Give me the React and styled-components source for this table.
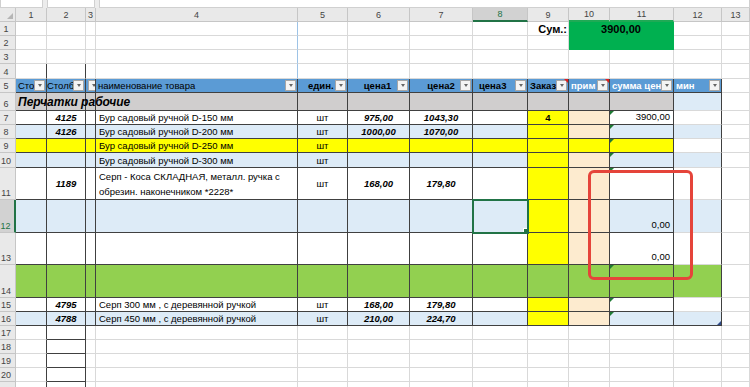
import React from 'react';
import styled, { createGlobalStyle, css } from 'styled-components';

const GlobalStyle = createGlobalStyle`
  html, body {
    margin: 0;
    padding: 0;
    background: #fff;
  }
  body {
    font-family: "Liberation Sans", Arial, sans-serif;
    overflow: hidden;
  }
`;

// column widths: row numbers, columns 1..13
const COLS = '16px 31px 39px 10px 202px 50px 62px 63px 55px 41px 41px 64px 48px 28px';

const LIGHT = '#D9D9D9';
const DARK = '#404040';
const W = '#FFFFFF';
const BAND = '#DDEBF7';
const GRAY = '#D0CECE';
const YEL = '#FFFF00';
const PEACH = '#FDEBCF';
const GREEN = '#92D050';
const SUMGREEN = '#00B050';
const HEADBLUE = '#5B9BD5';
const XLGREEN = '#217346';

const Sheet = styled.div`
  position: relative;
  width: 750px;
  height: 387px;
  overflow: hidden;
`;

const TopStrip = styled.div`
  height: 8px;
  box-sizing: border-box;
  background: #ececec;
  display: flex;
  gap: 4px;
`;

const StripBox = styled.div`
  width: ${p => p.$w}px;
  flex: ${p => (p.$grow ? 1 : 'none')};
  background: #fff;
  border: 1px solid #d0d0d0;
  border-top: none;
  box-sizing: border-box;
`;

const ColHeadRow = styled.div`
  display: grid;
  grid-template-columns: ${COLS};
  height: 14px;
  background: #e9e9e9;
`;

const Corner = styled.div`
  position: relative;
  border-right: 1px solid #c6c6c6;
  border-bottom: 1px solid #c6c6c6;
  &::after {
    content: '';
    position: absolute;
    right: 2px;
    bottom: 2px;
    border-left: 6px solid transparent;
    border-bottom: 6px solid #b5b5b5;
  }
`;

const ColHead = styled.div`
  box-sizing: border-box;
  display: flex;
  align-items: center;
  justify-content: center;
  font-size: 9px;
  color: ${p => (p.$active ? XLGREEN : '#444')};
  background: ${p => (p.$active ? '#d2d2d2' : '#e9e9e9')};
  border-right: 1px solid #c6c6c6;
  border-bottom: ${p => (p.$active || p.$mark ? `2px solid ${p.$active ? XLGREEN : '#1faa55'}` : '1px solid #c6c6c6')};
`;

const SheetRow = styled.div`
  display: grid;
  grid-template-columns: ${COLS};
  grid-template-rows: ${p => p.$h}px;
  height: ${p => p.$h}px;
`;

const RowHead = styled.div`
  grid-column: 1;
  grid-row: 1;
  box-sizing: border-box;
  display: flex;
  align-items: flex-end;
  justify-content: center;
  padding: 0 3px 1px 0;
  font-size: 9px;
  color: ${p => (p.$active ? XLGREEN : '#444')};
  background: ${p => (p.$active ? '#d2d2d2' : '#e9e9e9')};
  border-bottom: 1px solid #c6c6c6;
  border-right: ${p => (p.$active ? `2px solid ${XLGREEN}` : '1px solid #c6c6c6')};
`;

const Cell = styled.div`
  position: relative;
  grid-row: 1;
  grid-column: ${p => p.$c} / span ${p => p.$span || 1};
  box-sizing: border-box;
  display: flex;
  align-items: ${p => p.$valign || 'center'};
  justify-content: ${p => p.$align || 'flex-start'};
  padding: 0 ${p => p.$pad ?? 2}px ${p => p.$pb ?? 0}px ${p => p.$pl ?? 2}px;
  background: ${p => p.$bg || W};
  border-right: 1px solid ${p => p.$br || LIGHT};
  border-bottom: 1px solid ${p => p.$bb || LIGHT};
  overflow: hidden;
  white-space: nowrap;
  font-size: ${p => p.$size || 9.5}px;
  color: ${p => p.$fg || '#000'};
  font-weight: ${p => (p.$bold ? 700 : 400)};
  font-style: ${p => (p.$italic ? 'italic' : 'normal')};
  ${p => p.$flag && css`
    &::before {
      content: '';
      position: absolute;
      top: 0;
      left: 0;
      border-top: 4px solid #1e7b34;
      border-right: 4px solid transparent;
    }
  `}
  ${p => p.$note && css`
    &::after {
      content: '';
      position: absolute;
      top: 0;
      right: 0;
      border-top: 4px solid #e02020;
      border-left: 4px solid transparent;
    }
  `}
  ${p => p.$handle && css`
    &::after {
      content: '';
      position: absolute;
      right: 0;
      bottom: 0;
      border-bottom: 4px solid #2f4a8a;
      border-left: 4px solid transparent;
    }
  `}
  ${p => p.$sel && css`
    z-index: 1;
    outline: 2px solid ${XLGREEN};
    outline-offset: -1px;
    &::after {
      content: '';
      position: absolute;
      right: -3px;
      bottom: -3px;
      width: 5px;
      height: 5px;
      background: ${XLGREEN};
      border: 1px solid #fff;
    }
  `}
`;

const HeadText = styled.span`
  flex: 1;
  min-width: 0;
  overflow: hidden;
  text-align: ${p => p.$align || 'left'};
  padding-left: ${p => p.$indent || 0}px;
  padding-right: 2px;
`;

const DropBtn = styled.span`
  flex: none;
  width: 11px;
  height: 11px;
  margin-left: auto;
  box-sizing: border-box;
  border: 1px solid #a6a6a6;
  background: #f4f4f4;
  display: flex;
  align-items: center;
  justify-content: center;
  &::after {
    content: '';
    border-left: 2.5px solid transparent;
    border-right: 2.5px solid transparent;
    border-top: 3px solid #666;
  }
`;

const Lines = styled.div`
  display: flex;
  flex-direction: column;
  white-space: nowrap;
  line-height: 15px;
`;

const GroupLabel = styled.div`
  position: relative;
  z-index: 2;
  grid-row: 1;
  grid-column: 2 / 10;
  align-self: center;
  padding-left: 2px;
  font-size: 12px;
  font-weight: 700;
  font-style: italic;
  color: #000;
  white-space: nowrap;
`;

const Annotation = styled.div`
  position: absolute;
  z-index: 3;
  left: 588px;
  top: 170px;
  width: 105px;
  height: 110px;
  box-sizing: border-box;
  border: 3px solid #e5443a;
  border-radius: 6px;
`;

const plainCells = (overrides = {}) =>
  Array.from({ length: 13 }, (_, i) => ({ col: i + 1, ...(overrides[i + 1] || {}) })).filter(
    c => !c.skip
  );

function tableBg(kind, col) {
  if (kind === 'green') return GREEN;
  if (kind === 'gray') return col === 12 ? BAND : GRAY;
  if (kind === 'yellow') return col === 12 ? W : YEL;
  if (col === 9) return YEL;
  if (col === 10) return PEACH;
  return kind === 'band' ? BAND : W;
}

const headers = [
  { text: 'Сто' },
  { text: 'Столбе', pl: 0 },
  { text: '' },
  { text: 'наименование товара' },
  { text: 'един.', bold: true, align: 'center', indent: 8 },
  { text: 'цена1', bold: true, align: 'center', indent: 10 },
  { text: 'цена2', bold: true, align: 'center', indent: 12 },
  { text: 'цена3', bold: true, align: 'left', indent: 4 },
  { text: 'Заказ', bold: true, note: true },
  { text: 'прим', bold: true, fg: '#fff', note: true },
  { text: 'сумма цен', bold: true, fg: '#fff' },
  { text: 'мин', bold: true, fg: '#fff' },
];

const bodyRows = [
  { n: 6, h: 18, kind: 'gray', label: 'Перчатки рабочие' },
  { n: 7, h: 14, kind: 'white', code: '4125', name: ['Бур садовый ручной D-150 мм'], unit: 'шт', p1: '975,00', p2: '1043,30', order: '4', sum: '3900,00', flag: true },
  { n: 8, h: 14, kind: 'band', code: '4126', name: ['Бур садовый ручной D-200 мм'], unit: 'шт', p1: '1000,00', p2: '1070,00', flag: true },
  { n: 9, h: 14, kind: 'yellow', name: ['Бур садовый ручной D-250 мм'], unit: 'шт', flag: true },
  { n: 10, h: 15, kind: 'band', name: ['Бур садовый ручной D-300 мм'], unit: 'шт', flag: true },
  { n: 11, h: 32, kind: 'white', code: '1189', name: ['Серп - Коса СКЛАДНАЯ, металл. ручка с', 'обрезин. наконечником *2228*'], unit: 'шт', p1: '168,00', p2: '179,80', flag: true },
  { n: 12, h: 33, kind: 'band', sum: '0,00', selected: true },
  { n: 13, h: 32, kind: 'white', sum: '0,00' },
  { n: 14, h: 33, kind: 'green', flag: true },
  { n: 15, h: 14, kind: 'white', code: '4795', name: ['Серп 300 мм , с деревянной ручкой'], unit: 'шт', p1: '168,00', p2: '179,80', flag: true },
  { n: 16, h: 14, kind: 'band', code: '4788', name: ['Серп 450 мм , с деревянной ручкой'], unit: 'шт', p1: '210,00', p2: '224,70', flag: true, last: true },
];

function PlainRow({ n, h, cells, active, hideNumber }) {
  return (
    <SheetRow $h={h}>
      <RowHead $active={active}>{hideNumber ? '' : n}</RowHead>
      {cells.map(c => (
        <Cell
          key={c.col}
          $c={c.col + 1}
          $span={c.span}
          $bg={c.bg}
          $br={c.br}
          $bb={c.bb}
          $align={c.align}
          $bold={c.bold}
          $size={c.size}
          $pad={c.pad}
        >
          {c.text}
        </Cell>
      ))}
    </SheetRow>
  );
}

function HeaderRow() {
  return (
    <SheetRow $h={14}>
      <RowHead>5</RowHead>
      {headers.map((h, i) => (
        <Cell
          key={i}
          $c={i + 2}
          $bg={HEADBLUE}
          $br={DARK}
          $bb={DARK}
          $fg={h.fg}
          $bold={h.bold}
          $pl={h.pl ?? 2}
          $pad={1}
          $note={h.note}
        >
          {h.text && (
            <HeadText $align={h.align} $indent={h.indent}>
              {h.text}
            </HeadText>
          )}
          <DropBtn />
        </Cell>
      ))}
      <Cell $c={14} />
    </SheetRow>
  );
}

function BodyRow({ row }) {
  const tall = row.h > 20;
  const content = {
    2: row.code && { text: row.code, align: 'center', bold: true, italic: true },
    4: row.name && { text: <Lines>{row.name.map(l => <span key={l}>{l}</span>)}</Lines>, pl: 3 },
    5: row.unit && { text: row.unit, align: 'center' },
    6: row.p1 && { text: row.p1, align: 'center', bold: true, italic: true },
    7: row.p2 && { text: row.p2, align: 'center', bold: true, italic: true },
    9: row.order && { text: row.order, align: 'center', bold: true },
    11: row.sum && { text: row.sum, align: 'flex-end', valign: tall ? 'flex-end' : 'center', pad: 3, pb: 2 },
  };
  return (
    <SheetRow $h={row.h}>
      <RowHead $active={row.selected}>{row.n}</RowHead>
      {Array.from({ length: 12 }, (_, i) => {
        const col = i + 1;
        const c = content[col] || {};
        const bb = col === 12 && !row.last ? LIGHT : DARK;
        return (
          <Cell
            key={col}
            $c={col + 1}
            $bg={tableBg(row.kind, col)}
            $br={DARK}
            $bb={bb}
            $align={c.align}
            $valign={c.valign}
            $bold={c.bold}
            $italic={c.italic}
            $pad={c.pad}
            $pb={c.pb}
            $pl={c.pl}
            $flag={col === 11 && row.flag}
            $handle={col === 12 && row.last}
            $sel={col === 8 && row.selected}
          >
            {c.text}
          </Cell>
        );
      })}
      <Cell $c={14} />
      {row.label && <GroupLabel>{row.label}</GroupLabel>}
    </SheetRow>
  );
}

export default function App() {
  const topRows = [
    {
      n: 1,
      h: 14,
      cells: plainCells({
        4: { br: '#9dc3e6' },
        9: { text: 'Сум.:', bold: true, size: 11, align: 'flex-end', pad: 1 },
        10: { text: '3900,00', bold: true, size: 11, align: 'center', bg: SUMGREEN, br: SUMGREEN, bb: SUMGREEN, span: 2 },
        11: { skip: true },
      }),
    },
    {
      n: 2,
      h: 14,
      cells: plainCells({
        4: { br: '#9dc3e6' },
        10: { bg: SUMGREEN, br: SUMGREEN, bb: SUMGREEN, span: 2 },
        11: { skip: true },
      }),
    },
    { n: 3, h: 14, cells: plainCells({ 4: { br: '#9dc3e6' } }) },
    { n: 4, h: 15, cells: plainCells({ 1: { br: DARK }, 2: { br: DARK }, 4: { br: '#9dc3e6' } }) },
  ];

  const bottomRows = [17, 18, 19, 20, 21].map(n => ({
    n,
    h: 14,
    hideNumber: n === 21,
    cells: plainCells({ 1: { br: DARK }, 2: { br: DARK, bb: DARK } }),
  }));

  return (
    <>
      <GlobalStyle />
      <Sheet>
        <TopStrip>
          <StripBox $w={43} />
          <StripBox $w={48} />
          <StripBox $grow />
        </TopStrip>
        <ColHeadRow>
          <Corner />
          {Array.from({ length: 13 }, (_, i) => (
            <ColHead key={i} $active={i + 1 === 8} $mark={i + 1 === 10 || i + 1 === 11}>
              {i + 1}
            </ColHead>
          ))}
        </ColHeadRow>
        {topRows.map(r => (
          <PlainRow key={r.n} {...r} />
        ))}
        <HeaderRow />
        {bodyRows.map(r => (
          <BodyRow key={r.n} row={r} />
        ))}
        {bottomRows.map(r => (
          <PlainRow key={r.n} {...r} />
        ))}
        <Annotation />
      </Sheet>
    </>
  );
}
